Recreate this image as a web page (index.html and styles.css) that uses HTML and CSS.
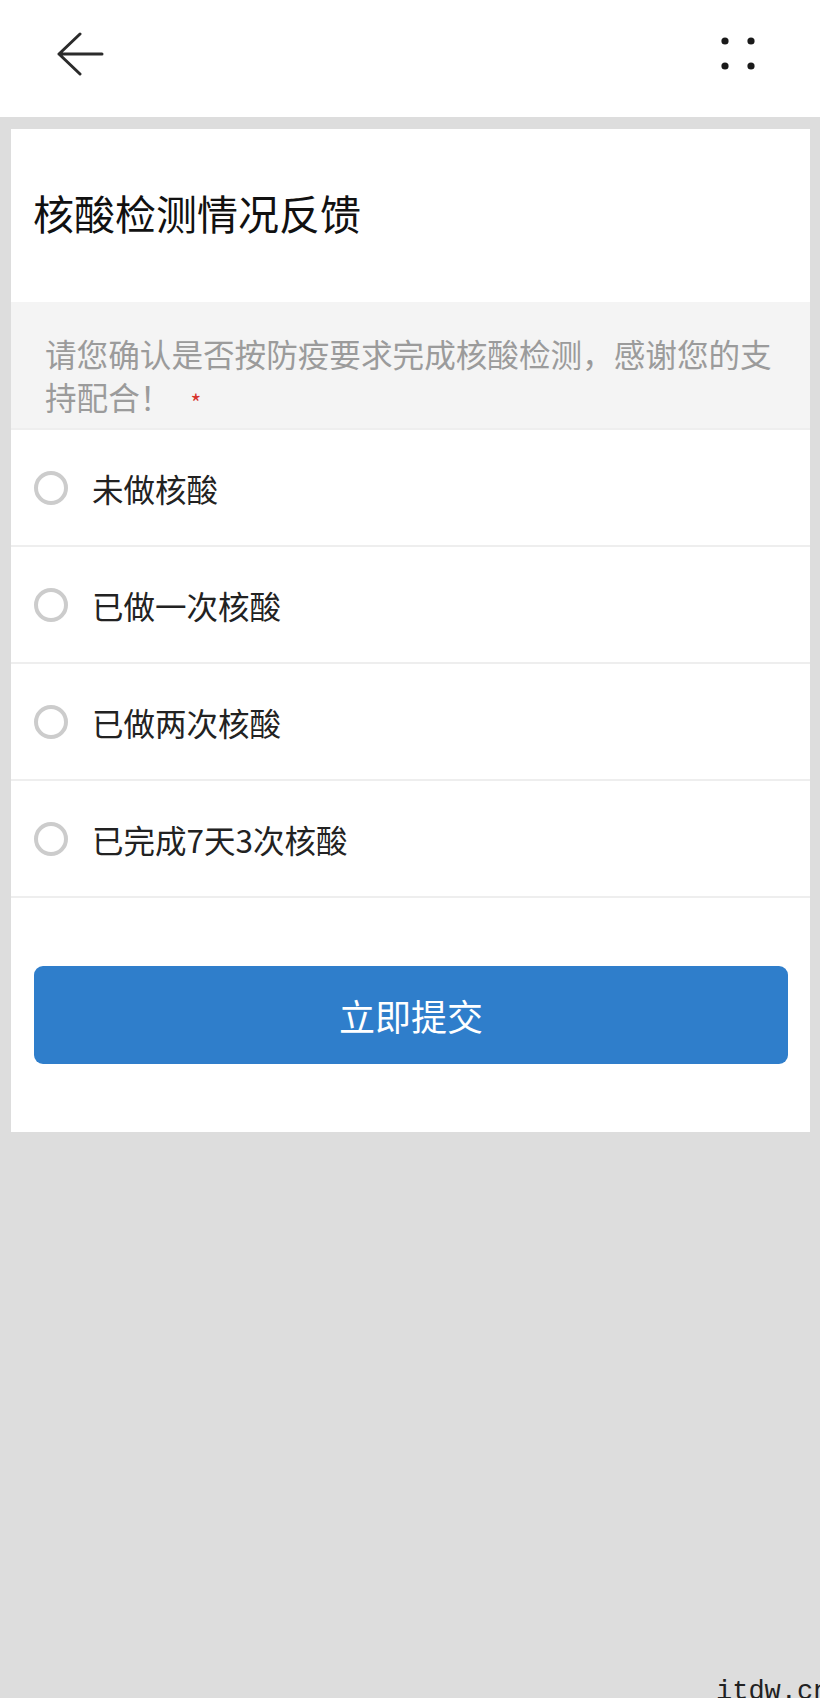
FILE: index.html
```html
<!DOCTYPE html>
<html lang="zh-CN">
<head>
<meta charset="utf-8">
<title>核酸检测情况反馈</title>
<link rel="stylesheet" href="styles.css">
</head>
<body>
<header class="topbar">
  <svg class="back" width="48" height="44" viewBox="0 0 48 44" aria-label="返回">
    <path d="M3 22 H46 M3 22 L24 2 M3 22 L24 42" fill="none" stroke="#2b2b2b" stroke-width="3" stroke-linecap="round" stroke-linejoin="round"/>
  </svg>
  <svg class="more" width="40" height="40" viewBox="0 0 40 40" aria-label="更多">
    <circle cx="7" cy="7" r="3.6" fill="#1a1a1a"/>
    <circle cx="33" cy="7" r="3.6" fill="#1a1a1a"/>
    <circle cx="7" cy="32" r="3.6" fill="#1a1a1a"/>
    <circle cx="33" cy="32" r="3.6" fill="#1a1a1a"/>
  </svg>
</header>

<main class="card">
  <h1 class="title">核酸检测情况反馈</h1>
  <div class="question">请您确认是否按防疫要求完成核酸检测，感谢您的支持配合！<span class="required">*</span></div>
  <ul class="options">
    <li class="option"><span class="radio"></span><span class="label">未做核酸</span></li>
    <li class="option"><span class="radio"></span><span class="label">已做一次核酸</span></li>
    <li class="option"><span class="radio"></span><span class="label">已做两次核酸</span></li>
    <li class="option"><span class="radio"></span><span class="label">已完成7天3次核酸</span></li>
  </ul>
  <div class="actions">
    <button class="submit" type="button">立即提交</button>
  </div>
</main>

<div class="watermark">itdw.cn</div>
</body>
</html>
```

FILE: styles.css
```css
html, body {
  margin: 0;
  padding: 0;
  height: 1698px;
  overflow: hidden;
}

body {
  position: relative;
  background: #dddddd;
  font-family: "Noto Sans CJK SC", "Noto Sans", sans-serif;
}

.topbar {
  height: 117px;
  background: #ffffff;
  display: flex;
  justify-content: space-between;
  align-items: flex-start;
  padding: 0 62px 0 56px;
  box-sizing: border-box;
}

.back {
  display: block;
  margin-top: 32px;
}

.more {
  display: block;
  margin-top: 34px;
}

.card {
  margin: 12px 10px 0 11px;
  background: #ffffff;
  display: flex;
  flex-direction: column;
}

.title {
  margin: 0;
  padding: 63px 22px 70px 22px;
  font-size: 41px;
  line-height: 40px;
  font-weight: 400;
  color: #111111;
}

.question {
  background: #f4f4f4;
  padding: 30px 20px 10px 34px;
  font-size: 31.6px;
  line-height: 43px;
  color: #9b9b9b;
}

.required {
  display: inline-block;
  color: #d7332c;
  font-size: 23px;
  line-height: 0;
  margin-left: 19px;
  vertical-align: -2px;
}

.options {
  list-style: none;
  margin: 0;
  padding: 0;
}

.option {
  height: 115px;
  border-top: 2px solid #eeeeee;
  display: flex;
  align-items: center;
  padding-left: 23px;
}

.option:last-child {
  border-bottom: 2px solid #eeeeee;
}

.radio {
  width: 34px;
  height: 34px;
  box-sizing: border-box;
  border: 4px solid #cccccc;
  border-radius: 50%;
  flex: none;
}

.label {
  margin-left: 24px;
  font-size: 31.5px;
  color: #222222;
}

.actions {
  padding: 68px 22px 68px 23px;
}

.submit {
  display: block;
  width: 100%;
  height: 98px;
  border: none;
  border-radius: 9px;
  background: #2f7ecb;
  color: #ffffff;
  font-family: "Noto Sans CJK SC", "Noto Sans", sans-serif;
  font-size: 36px;
  padding: 0;
}

.watermark {
  position: absolute;
  left: 716px;
  top: 1677px;
  font-family: "Liberation Mono", monospace;
  font-size: 27px;
  line-height: 30px;
  color: #222222;
  white-space: nowrap;
}
```
